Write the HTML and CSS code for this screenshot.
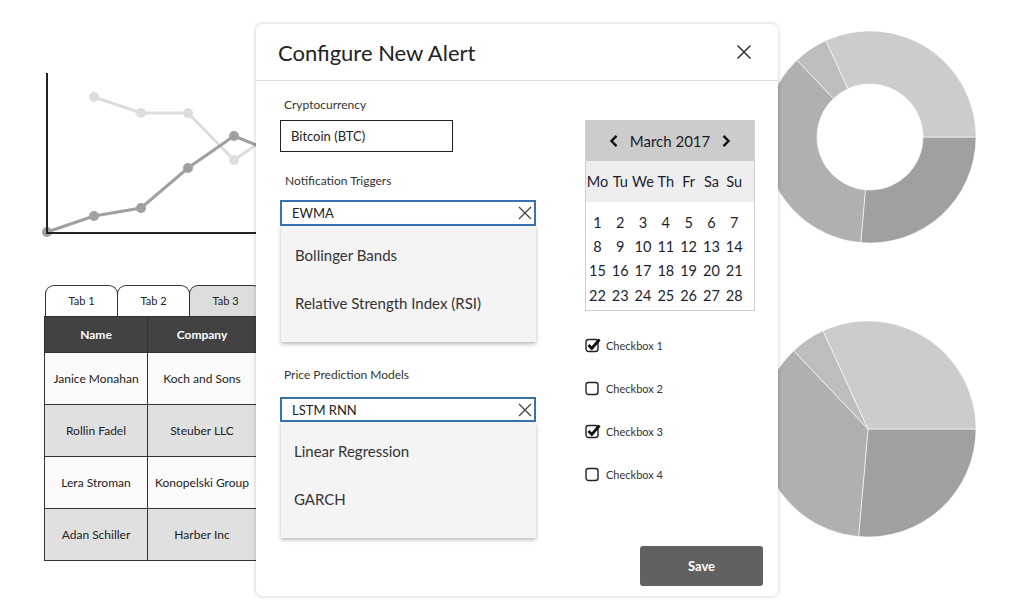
FILE: index.html
```html
<!DOCTYPE html>
<html>
<head>
<meta charset="utf-8">
<link rel="stylesheet" href="styles.css">
</head>
<body>
<div class="page">
  <div class="left">
    <svg class="line-chart" width="300" height="240" viewBox="0 0 300 240">
      <polyline points="94,97 141,113 188,113 234,160 281,128" fill="none" stroke="#dddddd" stroke-width="3"/>
      <g fill="#dddddd">
        <circle cx="94" cy="97" r="5"/><circle cx="141" cy="113" r="5"/><circle cx="188" cy="113" r="5"/><circle cx="234" cy="160" r="5"/>
      </g>
      <polyline points="47,232 94,216 141,208 188,168 234,136 281,155" fill="none" stroke="#a0a0a0" stroke-width="3"/>
      <g fill="#a0a0a0">
        <circle cx="47" cy="232" r="5"/><circle cx="94" cy="216" r="5"/><circle cx="141" cy="208" r="5"/><circle cx="188" cy="168" r="5"/><circle cx="234" cy="136" r="5"/>
      </g>
      <path d="M47,73 V233 H300" fill="none" stroke="#222" stroke-width="2"/>
    </svg>
    <div class="tabs">
      <div class="tab">Tab 1</div>
      <div class="tab">Tab 2</div>
      <div class="tab tab-muted">Tab 3</div>
    </div>
    <table class="data">
      <thead>
        <tr><th class="c1">Name</th><th class="c2">Company</th><th class="c3"></th></tr>
      </thead>
      <tbody>
        <tr class="odd"><td>Janice Monahan</td><td>Koch and Sons</td><td></td></tr>
        <tr class="even"><td>Rollin Fadel</td><td>Steuber LLC</td><td></td></tr>
        <tr class="odd"><td>Lera Stroman</td><td>Konopelski Group</td><td></td></tr>
        <tr class="even"><td>Adan Schiller</td><td>Harber Inc</td><td></td></tr>
      </tbody>
    </table>
  </div>
  <div class="right">
    <svg class="pies" width="257" height="603" viewBox="760 0 257 603">
      <g stroke="#ffffff" stroke-width="0.6">
        <path fill="#a0a0a0" d="M976,137 A106,106 0 0 1 860.76,242.60 L865.38,189.80 A53,53 0 0 0 923,137 Z"/>
        <path fill="#b0b0b0" d="M860.76,242.60 A106,106 0 0 1 797.03,60.11 L833.52,98.56 A53,53 0 0 0 865.38,189.80 Z"/>
        <path fill="#bdbdbd" d="M797.03,60.11 A106,106 0 0 1 825.87,40.62 L847.94,88.81 A53,53 0 0 0 833.52,98.56 Z"/>
        <path fill="#cccccc" d="M825.87,40.62 A106,106 0 0 1 976,137 L923,137 A53,53 0 0 0 847.94,88.81 Z"/>
        <path fill="#a0a0a0" d="M868,429 L976,429 A108,108 0 0 1 858.59,536.59 Z"/>
        <path fill="#b0b0b0" d="M868,429 L858.59,536.59 A108,108 0 0 1 793.66,350.66 Z"/>
        <path fill="#bdbdbd" d="M868,429 L793.66,350.66 A108,108 0 0 1 823.04,330.80 Z"/>
        <path fill="#cccccc" d="M868,429 L823.04,330.80 A108,108 0 0 1 976,429 Z"/>
      </g>
    </svg>
  </div>

  <div class="modal">
    <div class="modal-header">
      <h1 class="modal-title">Configure New Alert</h1>
      <svg class="close-icon" width="16" height="16" viewBox="0 0 16 16"><path d="M1.5,1.5 L14.5,14.5 M14.5,1.5 L1.5,14.5" stroke="#333" stroke-width="1.5" fill="none"/></svg>
    </div>
    <div class="modal-body">
      <div class="form-col">
        <div class="label label-first">Cryptocurrency</div>
        <div class="input input-plain">Bitcoin (BTC)</div>

        <div class="label label-trig">Notification Triggers</div>
        <div class="input input-focus">
          <span>EWMA</span>
          <svg class="clear-icon" width="14" height="14" viewBox="0 0 14 14"><path d="M1,1 L13,13 M13,1 L1,13" stroke="#444" stroke-width="1.3" fill="none"/></svg>
        </div>
        <div class="dropdown">
          <div class="dd-item">Bollinger Bands</div>
          <div class="dd-item">Relative Strength Index (RSI)</div>
        </div>

        <div class="label label-price">Price Prediction Models</div>
        <div class="input input-focus input-short">
          <span>LSTM RNN</span>
          <svg class="clear-icon" width="14" height="14" viewBox="0 0 14 14"><path d="M1,1 L13,13 M13,1 L1,13" stroke="#444" stroke-width="1.3" fill="none"/></svg>
        </div>
        <div class="dropdown dropdown-b">
          <div class="dd-item">Linear Regression</div>
          <div class="dd-item">GARCH</div>
        </div>
      </div>

      <div class="side-col">
        <div class="calendar">
          <div class="cal-head">
            <svg width="10" height="14" viewBox="0 0 10 14"><path d="M7.5,1.8 L2.5,7 L7.5,12.2" stroke="#111" stroke-width="2.4" fill="none"/></svg>
            <span class="cal-month">March 2017</span>
            <svg width="10" height="14" viewBox="0 0 10 14"><path d="M2.5,1.8 L7.5,7 L2.5,12.2" stroke="#111" stroke-width="2.4" fill="none"/></svg>
          </div>
          <div class="cal-days">
            <span>Mo</span><span>Tu</span><span>We</span><span>Th</span><span>Fr</span><span>Sa</span><span>Su</span>
          </div>
          <div class="cal-grid">
            <span>1</span><span>2</span><span>3</span><span>4</span><span>5</span><span>6</span><span>7</span>
            <span>8</span><span>9</span><span>10</span><span>11</span><span>12</span><span>13</span><span>14</span>
            <span>15</span><span>16</span><span>17</span><span>18</span><span>19</span><span>20</span><span>21</span>
            <span>22</span><span>23</span><span>24</span><span>25</span><span>26</span><span>27</span><span>28</span>
          </div>
        </div>

        <div class="checks">
          <div class="check">
            <svg width="16" height="16" viewBox="0 0 16 16"><rect x="1" y="2.5" width="12" height="12" rx="2.5" fill="none" stroke="#222" stroke-width="1.4"/><path d="M3.5,8 L6.8,11.5 L14.5,2.5" fill="none" stroke="#111" stroke-width="2.8"/></svg>
            <span>Checkbox 1</span>
          </div>
          <div class="check">
            <svg width="16" height="16" viewBox="0 0 16 16"><rect x="1" y="2.5" width="12" height="12" rx="2.5" fill="none" stroke="#222" stroke-width="1.4"/></svg>
            <span>Checkbox 2</span>
          </div>
          <div class="check">
            <svg width="16" height="16" viewBox="0 0 16 16"><rect x="1" y="2.5" width="12" height="12" rx="2.5" fill="none" stroke="#222" stroke-width="1.4"/><path d="M3.5,8 L6.8,11.5 L14.5,2.5" fill="none" stroke="#111" stroke-width="2.8"/></svg>
            <span>Checkbox 3</span>
          </div>
          <div class="check">
            <svg width="16" height="16" viewBox="0 0 16 16"><rect x="1" y="2.5" width="12" height="12" rx="2.5" fill="none" stroke="#222" stroke-width="1.4"/></svg>
            <span>Checkbox 4</span>
          </div>
        </div>
      </div>
    </div>
    <div class="modal-footer">
      <button class="save-btn">Save</button>
    </div>
  </div>
</div>
</body>
</html>
```

FILE: styles.css
```css
* { box-sizing: border-box; }
html, body { margin: 0; padding: 0; background: #ffffff; }
body {
  font-family: Lato, "Open Sans", "Liberation Sans", sans-serif;
  color: #222;
}
.page {
  position: relative;
  width: 1017px;
  height: 603px;
  overflow: hidden;
  display: flex;
}
.left { width: 400px; flex: none; }
.line-chart { display: block; }
.tabs {
  display: flex;
  margin: 45px 0 0 45px;
  height: 31px;
}
.tab {
  width: 73px;
  height: 31px;
  border: 1px solid #333;
  border-bottom: none;
  border-radius: 9px 9px 0 0;
  background: #fff;
  font-size: 11px;
  display: flex;
  align-items: center;
  justify-content: center;
  color: #222;
  margin-right: -1px;
  padding-bottom: 1px;
}
.tab-muted { background: #dddddd; }
.data {
  margin-left: 44px;
  border-collapse: collapse;
  font-size: 12px;
  table-layout: fixed;
  width: 330px;
}
.data th, .data td {
  border: 1px solid #333;
  text-align: center;
  padding: 0;
}
.data th {
  background: #424242;
  color: #fff;
  font-weight: 700;
  height: 36px;
}
.data td { height: 52px; color: #222; }
.c1 { width: 103px; }
.c2 { width: 109px; }
.odd td { background: #fafafa; }
.even td { background: #e0e0e0; }

.right { margin-left: auto; width: 257px; flex: none; }
.pies { display: block; }

.modal {
  position: absolute;
  left: 256px;
  top: 24px;
  width: 522px;
  height: 572px;
  background: #fff;
  border-radius: 6px;
  box-shadow: 0 0 4px rgba(0,0,0,0.22);
  display: flex;
  flex-direction: column;
}
.modal-header {
  height: 57px;
  border-bottom: 1px solid #e0e0e0;
  display: flex;
  align-items: center;
  padding: 0 26px 0 22px;
}
.modal-title {
  margin: 0;
  font-size: 22px;
  font-weight: 400;
  color: #222;
  flex: 1;
}
.close-icon { display: block; }
.modal-body {
  flex: 1;
  display: flex;
  padding: 16px 0 0 24px;
}
.form-col { width: 256px; flex: none; }
.label {
  font-size: 12px;
  line-height: 16px;
  color: #333;
  margin-left: 4px;
}
.label-first { margin-bottom: 7px; }
.label-trig { margin-top: 21px; margin-bottom: 11px; margin-left: 5px; }
.label-price { margin-top: 25px; margin-bottom: 14px; }
.input {
  font-size: 13px;
  color: #222;
  display: flex;
  align-items: center;
}
.input-plain {
  width: 173px;
  height: 32px;
  border: 1px solid #222;
  padding-left: 10px;
}
.input-focus {
  width: 256px;
  height: 26px;
  border: 2px solid #3a72b0;
  padding: 0 2px 0 10px;
  justify-content: space-between;
}
.input-short { height: 25px; }
.clear-icon { display: block; }
.dropdown {
  margin-left: 1px;
  width: 255px;
  height: 116px;
  background: #f4f4f4;
  box-shadow: 0 2px 4px rgba(0,0,0,0.28);
  padding-top: 5px;
}
.dd-item {
  height: 48px;
  line-height: 48px;
  font-size: 15px;
  color: #333;
  padding-left: 14px;
}
.dropdown-b .dd-item { padding-left: 13px; }

.side-col { margin-left: 49px; padding-top: 23px; }
.calendar {
  width: 170px;
  height: 191px;
  border: 1px solid #cfcfcf;
}
.cal-head {
  height: 40px;
  background: #cccccc;
  display: flex;
  align-items: center;
  justify-content: center;
  gap: 11px;
}
.cal-month { font-size: 15px; color: #1a1a2a; }
.cal-days, .cal-grid {
  display: grid;
  grid-template-columns: repeat(7, 22.8px);
  padding-left: 0;
  font-size: 14.5px;
  color: #1e1e2e;
  text-align: center;
}
.cal-days {
  height: 41px;
  background: #eeeeee;
  align-items: center;
}
.cal-grid {
  padding-top: 8px;
  grid-auto-rows: 24.4px;
  align-items: center;
}
.checks { margin-top: 25px; display: flex; flex-direction: column; gap: 25px; }
.check {
  display: flex;
  align-items: center;
  height: 18px;
  font-size: 11px;
  color: #333;
}
.check svg { display: block; margin-right: 5px; }

.modal-footer {
  display: flex;
  justify-content: flex-end;
  padding: 0 15px 10px 0;
}
.save-btn {
  width: 123px;
  height: 40px;
  border: none;
  border-radius: 3px;
  background: #616161;
  color: #fff;
  font-family: inherit;
  font-size: 13px;
  font-weight: 700;
}
```
